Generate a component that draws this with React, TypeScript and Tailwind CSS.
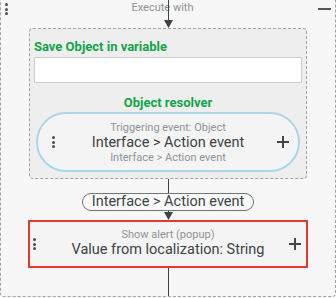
import React from 'react';

function Dots({ className = '' }: { className?: string }) {
  return (
    <div className={`flex flex-col gap-[1.5px] ${className}`}>
      <span className="block h-[3px] w-[3px] rounded-full bg-[#4a4f54]" />
      <span className="block h-[3px] w-[3px] rounded-full bg-[#4a4f54]" />
      <span className="block h-[3px] w-[3px] rounded-full bg-[#4a4f54]" />
    </div>
  );
}

function Plus() {
  return (
    <svg width="12" height="12" viewBox="0 0 12 12" className="block">
      <path d="M6 0v12M0 6h12" stroke="#40464b" strokeWidth="2" />
    </svg>
  );
}

function Arrow() {
  return (
    <svg width="9" height="8" viewBox="0 0 9 8" className="block">
      <polygon points="0,0 9,0 4.5,8" fill="#3c4247" />
    </svg>
  );
}

export default function App() {
  return (
    <div className="h-[298px] w-[336px] overflow-hidden bg-white font-['Roboto',sans-serif]">
      <div className="-mt-[10px] flex h-[307px] flex-col items-center rounded-b-[4px] border border-dashed border-[#a3a3a3] bg-[#f7f7f7]">
        {/* header */}
        <div className="relative h-[37px] w-full">
          <Dots className="absolute left-[4px] top-[12px]" />
          <p className="pr-[11px] pt-[10px] text-center text-[11px] leading-[13px] text-[#8e9398]">Execute with</p>
          <div className="absolute left-[163px] top-0 flex flex-col items-center">
            <div className="h-[29px] w-px bg-[#3c4247]" />
            <Arrow />
          </div>
          <div className="absolute right-[4px] top-[17px] h-[2px] w-[13px] bg-[#50565b]" />
        </div>

        {/* resolver group */}
        <div className="flex w-[278px] flex-col rounded-[4px] border border-dashed border-[#a3a3a3] bg-[#eeeeee] px-[4px] pb-[6px] pt-[10px]">
          <p className="text-[13px] font-bold leading-[16px] text-[#13a34b]">Save Object in variable</p>
          <div className="mt-[2px] h-[26px] border border-[#cfcfcf] bg-white" />
          <p className="mt-[12px] text-center text-[13px] font-bold leading-[16px] text-[#13a34b]">Object resolver</p>
          <div className="mx-auto mt-[1px] grid h-[60px] w-[264px] grid-cols-[30px_1fr_30px] items-center rounded-full border-2 border-[#a9d7e8] bg-[#f4f4f4]">
            <Dots className="pl-[14px]" />
            <div className="flex flex-col items-center text-center">
              <span className="text-[11px] leading-[13px] text-[#8e9398]">Triggering event: Object</span>
              <span className="text-[14.5px] leading-[17px] text-[#3c4247]">Interface &gt; Action event</span>
              <span className="text-[11px] leading-[13px] text-[#8e9398]">Interface &gt; Action event</span>
            </div>
            <div className="flex justify-end pr-[9px]">
              <Plus />
            </div>
          </div>
        </div>

        <div className="h-[14px] w-px bg-[#3c4247]" />
        <div className="flex h-[18px] w-[172px] items-center justify-center rounded-full border border-[#6f7478] bg-[#fafafa] text-[14.5px] leading-[16px] text-[#3c4247]">
          Interface &gt; Action event
        </div>
        <div className="h-px w-px bg-[#3c4247]" />
        <Arrow />

        {/* action */}
        <div className="grid h-[48px] w-[280px] grid-cols-[30px_1fr_30px] border-2 border-[#e53935] bg-[#f4f4f4]">
          <div className="flex items-center pl-[3px]">
            <Dots />
          </div>
          <div className="flex flex-col items-center pt-[6px] text-center">
            <span className="text-[11px] leading-[13px] text-[#8e9398]">Show alert (popup)</span>
            <span className="text-[14.5px] leading-[17px] text-[#3c4247]">Value from localization: String</span>
          </div>
          <div className="flex items-center justify-end pr-[5px]">
            <Plus />
          </div>
        </div>
        <div className="w-px flex-1 bg-[#3c4247]" />
      </div>
    </div>
  );
}
